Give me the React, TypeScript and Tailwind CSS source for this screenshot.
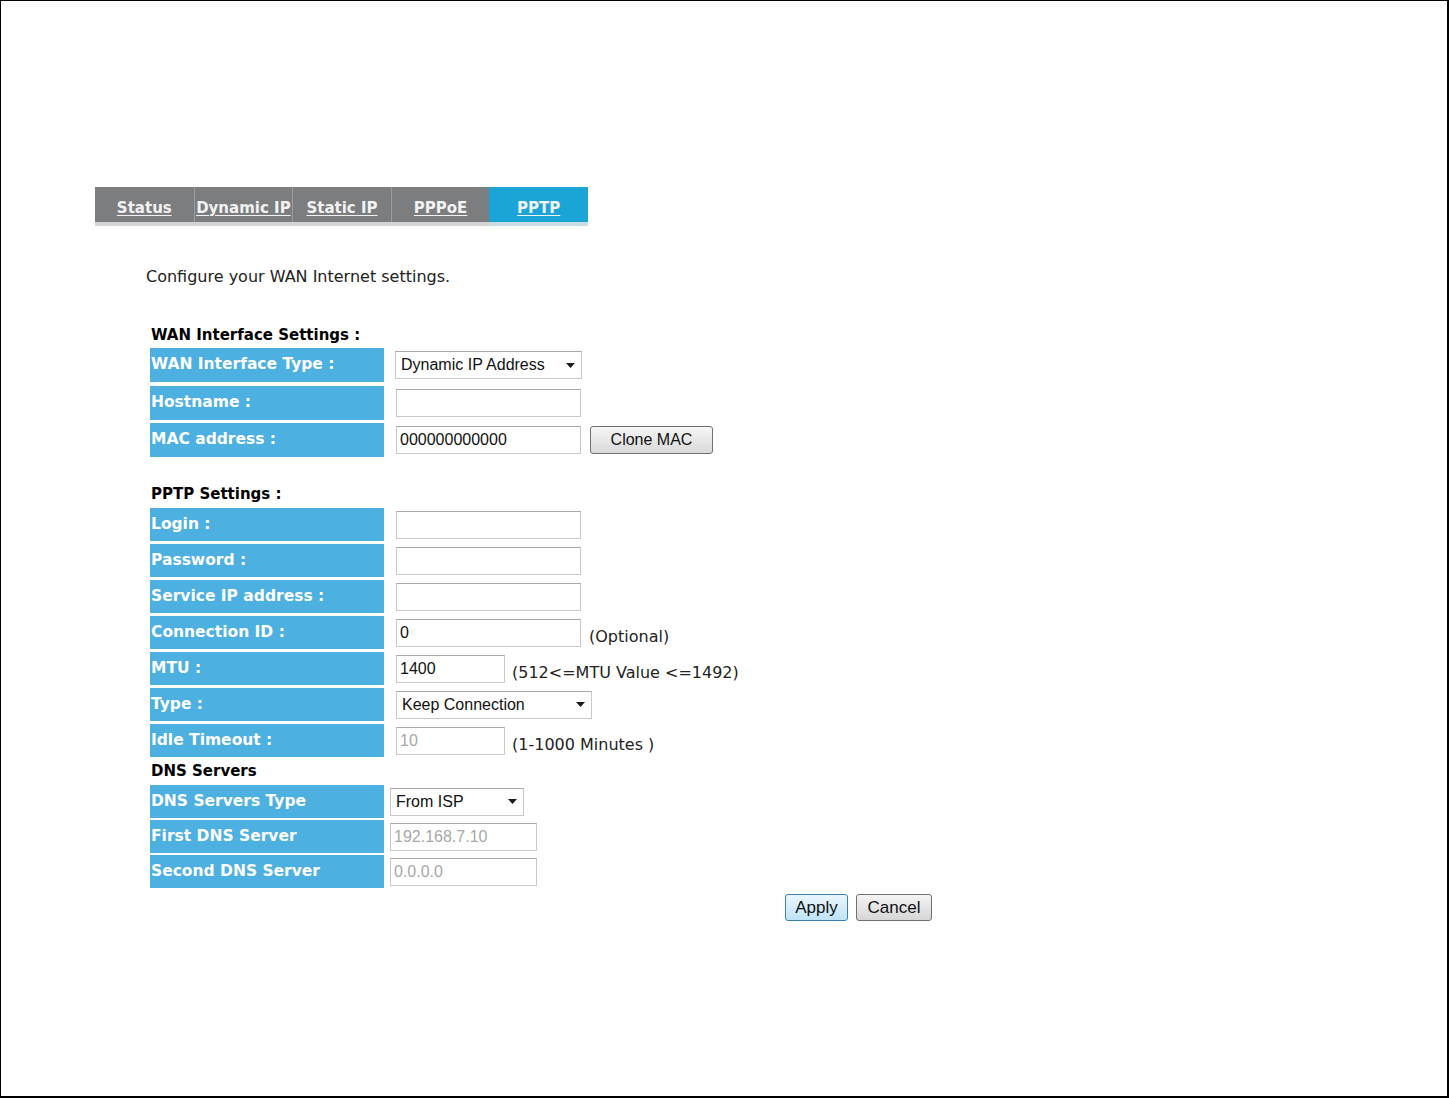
import React from "react";

const labelCls =
  "w-[234px] h-full bg-[#4cb0e0] text-white font-bold text-[15.5px] pl-[1px] flex items-center font-['DejaVu_Sans',sans-serif] shrink-0 whitespace-nowrap";
const inputCls =
  "h-[28px] bg-white border border-[#c9c9c9] border-t-[#a9a9a9] flex items-center pl-[3px] text-[16px] text-[#111] font-['Liberation_Sans',Arial,sans-serif] whitespace-nowrap";
const hintCls = "text-[16px] text-[#222] font-['DejaVu_Sans',sans-serif] mt-[8px] whitespace-nowrap";

function Caret() {
  return (
    <svg width="9" height="5" viewBox="0 0 9 5" className="shrink-0">
      <polygon points="0,0 9,0 4.5,5" fill="#1a1a1a" />
    </svg>
  );
}

function Select({ text, w, ml }: { text: string; w: string; ml: string }) {
  return (
    <div className={`${inputCls} ${w} ${ml} justify-between pr-[6px] pl-[5px]`}>
      <span>{text}</span>
      <Caret />
    </div>
  );
}

function Input({ text = "", w, ml, muted = false }: { text?: string; w: string; ml: string; muted?: boolean }) {
  return (
    <div className={`${inputCls} ${w} ${ml} ${muted ? "text-[#a8a8a8]" : ""}`}>{text}</div>
  );
}

function Row({ label, h, children }: { label: string; h: string; children?: React.ReactNode }) {
  return (
    <div className={`flex ${h} items-stretch`}>
      <div className={labelCls}>{label}</div>
      <div className="flex items-center">{children}</div>
    </div>
  );
}

const headCls = "text-[15px] font-bold text-black leading-[20px] font-['DejaVu_Sans',sans-serif] pl-[5px]";

export default function App() {
  const tabs = ["Status", "Dynamic IP", "Static IP", "PPPoE", "PPTP"];
  return (
    <div className="w-[1449px] h-[1098px] bg-white border-t border-l border-r-2 border-b-2 border-black overflow-hidden">
      <div className="pt-[186px] pl-[94px]">
        <div className="w-[493px]">
          <div className="grid grid-cols-5 h-[35px] bg-[#7c7d7f]">
            {tabs.map((t, i) => (
              <div
                key={t}
                className={`flex items-center justify-center ${i === 4 ? "bg-[#1aa5d6]" : ""} ${
                  i >= 1 && i <= 3 ? "border-l border-[#9c9d9f]" : ""
                }`}
              >
                <span className="text-[15px] font-bold text-[#f2f2f2] underline underline-offset-2 font-['DejaVu_Sans',sans-serif] pt-[8px]">
                  {t}
                </span>
              </div>
            ))}
          </div>
          <div className="flex h-[4px]">
            <div className="w-[396px] bg-[#d4d4d4]" />
            <div className="flex-1 bg-[#c9dce3]" />
          </div>
        </div>
      </div>

      <div className="pl-[145px]">
        <div className="mt-[41px] text-[16px] leading-[20px] text-[#222] font-['DejaVu_Sans',sans-serif]">
          Configure your WAN Internet settings.
        </div>

        <div className={`mt-[38px] ${headCls}`}>WAN Interface Settings :</div>
        <div className="mt-[3px] ml-[4px] flex flex-col gap-[3.5px]">
          <Row label="WAN Interface Type :" h="h-[34px]">
            <Select text="Dynamic IP Address" w="w-[187px]" ml="ml-[11px]" />
          </Row>
          <Row label="Hostname :" h="h-[34px]">
            <Input w="w-[185px]" ml="ml-[12px]" />
          </Row>
          <Row label="MAC address :" h="h-[34px]">
            <Input text="000000000000" w="w-[185px]" ml="ml-[12px]" />
            <button className="ml-[9px] w-[123px] h-[28px] rounded-[3px] border border-[#707070] bg-gradient-to-b from-[#f6f6f6] to-[#d9d9d9] text-[16px] text-[#111] font-['Liberation_Sans',Arial,sans-serif]">
              Clone MAC
            </button>
          </Row>
        </div>

        <div className={`mt-[27px] ${headCls}`}>PPTP Settings :</div>
        <div className="mt-[4px] ml-[4px] flex flex-col gap-[3px]">
          <Row label="Login :" h="h-[33px]">
            <Input w="w-[185px]" ml="ml-[12px]" />
          </Row>
          <Row label="Password :" h="h-[33px]">
            <Input w="w-[185px]" ml="ml-[12px]" />
          </Row>
          <Row label="Service IP address :" h="h-[33px]">
            <Input w="w-[185px]" ml="ml-[12px]" />
          </Row>
          <Row label="Connection ID :" h="h-[33px]">
            <Input text="0" w="w-[185px]" ml="ml-[12px]" />
            <span className={`${hintCls} ml-[8px]`}>(Optional)</span>
          </Row>
          <Row label="MTU :" h="h-[33px]">
            <Input text="1400" w="w-[109px]" ml="ml-[12px]" />
            <span className={`${hintCls} ml-[7px]`}>(512&lt;=MTU Value &lt;=1492)</span>
          </Row>
          <Row label="Type :" h="h-[33px]">
            <Select text="Keep Connection" w="w-[196px]" ml="ml-[12px]" />
          </Row>
          <Row label="Idle Timeout :" h="h-[33px]">
            <Input text="10" w="w-[109px]" ml="ml-[12px]" muted />
            <span className={`${hintCls} ml-[7px]`}>(1-1000 Minutes )</span>
          </Row>
        </div>

        <div className={`mt-[4px] ${headCls}`}>DNS Servers</div>
        <div className="mt-[4px] ml-[4px] flex flex-col gap-[2px]">
          <Row label="DNS Servers Type" h="h-[33px]">
            <Select text="From ISP" w="w-[134px]" ml="ml-[6px]" />
          </Row>
          <Row label="First DNS Server" h="h-[33px]">
            <Input text="192.168.7.10" w="w-[147px]" ml="ml-[6px]" muted />
          </Row>
          <Row label="Second DNS Server" h="h-[33px]">
            <Input text="0.0.0.0" w="w-[147px]" ml="ml-[6px]" muted />
          </Row>
        </div>

        <div className="mt-[6px] w-[786px] flex justify-end gap-[8px]">
          <button className="w-[63px] h-[27px] rounded-[3px] border border-[#3c7fb1] bg-gradient-to-b from-[#eaf6fd] to-[#bfe3f7] text-[17px] text-[#111] font-['Liberation_Sans',Arial,sans-serif]">
            Apply
          </button>
          <button className="w-[76px] h-[27px] rounded-[3px] border border-[#707070] bg-gradient-to-b from-[#f4f4f4] to-[#d6d6d6] text-[17px] text-[#111] font-['Liberation_Sans',Arial,sans-serif]">
            Cancel
          </button>
        </div>
      </div>
    </div>
  );
}
